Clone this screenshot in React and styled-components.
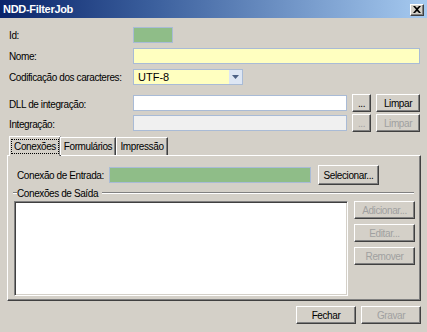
import React from 'react';
import styled, { createGlobalStyle, css } from 'styled-components';

const GlobalStyle = createGlobalStyle`
  html, body {
    margin: 0;
    padding: 0;
    background: #d4d0c8;
  }
  body {
    font-family: "Liberation Sans", Arial, sans-serif;
    font-size: 10px;
    letter-spacing: -0.4px;
    color: #000;
  }
  * {
    box-sizing: border-box;
  }
`;

const raised = css`
  border: 1px solid;
  border-color: #ffffff #404040 #404040 #ffffff;
  box-shadow: inset -1px -1px 0 #808080;
`;

const Window = styled.div`
  width: 427px;
  height: 332px;
  display: flex;
  flex-direction: column;
  background: #d4d0c8;
  overflow: hidden;
`;

const TitleBar = styled.div`
  height: 18px;
  display: flex;
  align-items: center;
  justify-content: space-between;
  padding: 0 3px 0 3px;
  background: linear-gradient(90deg, #0a246a 0%, #3a5e9c 35%, #a6caf0 100%);
  color: #fff;
  font-weight: bold;
  font-size: 11px;
  letter-spacing: -0.3px;
`;

const CloseButton = styled.div`
  width: 14px;
  height: 12px;
  margin-top: 1px;
  background: #d4d0c8;
  ${raised};
  display: flex;
  align-items: center;
  justify-content: center;
`;

const Body = styled.div`
  flex: 1;
  display: flex;
  flex-direction: column;
  padding: 9px 6px 0 9px;
`;

const Row = styled.div`
  display: flex;
  align-items: center;
  gap: 5px;
  height: ${p => p.$h || 16}px;
  margin-top: ${p => p.$mt || 0}px;
  margin-right: 1px;
`;

const Label = styled.span`
  width: ${p => p.$w || 119}px;
  flex: none;
  padding-top: ${p => p.$dy || 0}px;
  white-space: nowrap;
`;

const Field = styled.div`
  height: 16px;
  width: ${p => (p.$w ? `${p.$w}px` : 'auto')};
  flex: ${p => (p.$w ? 'none' : 1)};
  border: 1px solid #a9bbd6;
  background: ${p => p.$bg || '#fff'};
  display: flex;
  align-items: center;
  padding-left: 3px;
`;

const Combo = styled.div`
  width: 110px;
  height: 16px;
  border: 1px solid #a9bbd6;
  background: #ffffc0;
  display: flex;
  align-items: stretch;
`;

const ComboText = styled.span`
  flex: 1;
  padding-left: 4px;
  display: flex;
  align-items: center;
  font-size: 11px;
  letter-spacing: 0;
`;

const ComboArrow = styled.span`
  width: 13px;
  background: #dde6f4;
  display: flex;
  align-items: center;
  justify-content: center;
`;

const Button = styled.div`
  height: ${p => p.$h || 18}px;
  width: ${p => p.$w}px;
  flex: none;
  margin-left: ${p => p.$ml || 0}px;
  ${raised};
  display: flex;
  align-items: center;
  justify-content: center;
  color: ${p => (p.$disabled ? '#a0a0a0' : '#000')};
  white-space: nowrap;
`;

const TabStrip = styled.div`
  display: flex;
  align-items: flex-end;
  height: 20px;
  margin-top: 3px;
  padding-left: 1px;
  position: relative;
  z-index: 1;
`;

const Tab = styled.div`
  height: ${p => (p.$active ? 20 : 18)}px;
  width: ${p => p.$w}px;
  margin: 0 ${p => (p.$active ? '-1px' : 0)};
  margin-bottom: ${p => (p.$active ? '-1px' : 0)};
  border: 1px solid;
  border-color: #ffffff #404040 transparent #ffffff;
  border-bottom: none;
  box-shadow: inset -1px 0 0 #808080;
  background: #d4d0c8;
  display: flex;
  justify-content: center;
  align-items: flex-start;
  padding-top: 3px;
`;

const Focus = styled.span`
  outline: 1px dotted #000;
  padding: 0 2px;
  line-height: 13px;
`;

const Panel = styled.div`
  height: 146px;
  margin-left: -2px;
  border: 1px solid;
  border-color: #ffffff #404040 #404040 #ffffff;
  box-shadow: inset -1px -1px 0 #808080;
  padding: 9px 5px 0 9px;
  display: flex;
  flex-direction: column;
`;

const GroupHeader = styled.div`
  display: flex;
  align-items: center;
  margin: 2px 1px 0 -4px;
  height: 12px;
`;

const GroupLine = styled.span`
  flex: ${p => (p.$fill ? 1 : 'none')};
  width: ${p => (p.$fill ? 'auto' : '4px')};
  height: 2px;
  border-top: 1px solid #808080;
  border-bottom: 1px solid #ffffff;
`;

const GroupTitle = styled.span`
  padding: 0 4px 0 0;
`;

const GroupBody = styled.div`
  display: flex;
  gap: 6px;
  margin-top: 2px;
  margin-left: -3px;
`;

const ListBox = styled.div`
  width: 334px;
  height: 95px;
  background: #fff;
  border: 1px solid;
  border-color: #808080 #ffffff #ffffff #808080;
  box-shadow: inset 1px 1px 0 #404040, inset -1px -1px 0 #d4d0c8;
`;

const SideButtons = styled.div`
  display: flex;
  flex-direction: column;
  gap: 5px;
`;

const Footer = styled.div`
  display: flex;
  justify-content: flex-end;
  gap: 5px;
  margin-top: 5px;
`;

const Arrow = () => (
  <svg width="7" height="4" viewBox="0 0 7 4">
    <path d="M0 0 H7 L3.5 4 Z" fill="#4d6185" />
  </svg>
);

const CloseIcon = () => (
  <svg width="8" height="7" viewBox="0 0 8 7">
    <path d="M0 0 L2 0 L4 2 L6 0 L8 0 L5 3.5 L8 7 L6 7 L4 5 L2 7 L0 7 L3 3.5 Z" fill="#000" />
  </svg>
);

export default function App() {
  return (
    <>
      <GlobalStyle />
      <Window>
        <TitleBar>
          <span>NDD-FilterJob</span>
          <CloseButton><CloseIcon /></CloseButton>
        </TitleBar>
        <Body>
          <Row>
            <Label>Id:</Label>
            <Field $w={40} $bg="#8fbd88" />
          </Row>
          <Row $mt={5}>
            <Label>Nome:</Label>
            <Field $bg="#ffffc0" />
          </Row>
          <Row $mt={5}>
            <Label>Codificação dos caracteres:</Label>
            <Combo>
              <ComboText>UTF-8</ComboText>
              <ComboArrow><Arrow /></ComboArrow>
            </Combo>
          </Row>
          <Row $mt={9} $h={18}>
            <Label $dy={2}>DLL de integração:</Label>
            <Field />
            <Button $w={19}>...</Button>
            <Button $w={44}>Limpar</Button>
          </Row>
          <Row $mt={2} $h={18}>
            <Label $dy={3}>Integração:</Label>
            <Field $bg="#f0f0f0" />
            <Button $w={19} $disabled>...</Button>
            <Button $w={44} $disabled>Limpar</Button>
          </Row>
          <TabStrip>
            <Tab $active $w={52}><Focus>Conexões</Focus></Tab>
            <Tab $w={56}>Formulários</Tab>
            <Tab $w={52}>Impressão</Tab>
          </TabStrip>
          <Panel>
            <Row $h={20}>
              <Label $w={87}>Conexão de Entrada:</Label>
              <Field $w={202} $bg="#8fbd88" />
              <Button $w={61} $h={20} $ml={2}>Selecionar...</Button>
            </Row>
            <GroupHeader>
              <GroupLine />
              <GroupTitle>Conexões de Saída</GroupTitle>
              <GroupLine $fill />
            </GroupHeader>
            <GroupBody>
              <ListBox />
              <SideButtons>
                <Button $w={61} $disabled>Adicionar...</Button>
                <Button $w={61} $disabled>Editar...</Button>
                <Button $w={61} $disabled>Remover</Button>
              </SideButtons>
            </GroupBody>
          </Panel>
          <Footer>
            <Button $w={60}>Fechar</Button>
            <Button $w={60} $disabled>Gravar</Button>
          </Footer>
        </Body>
      </Window>
    </>
  );
}
